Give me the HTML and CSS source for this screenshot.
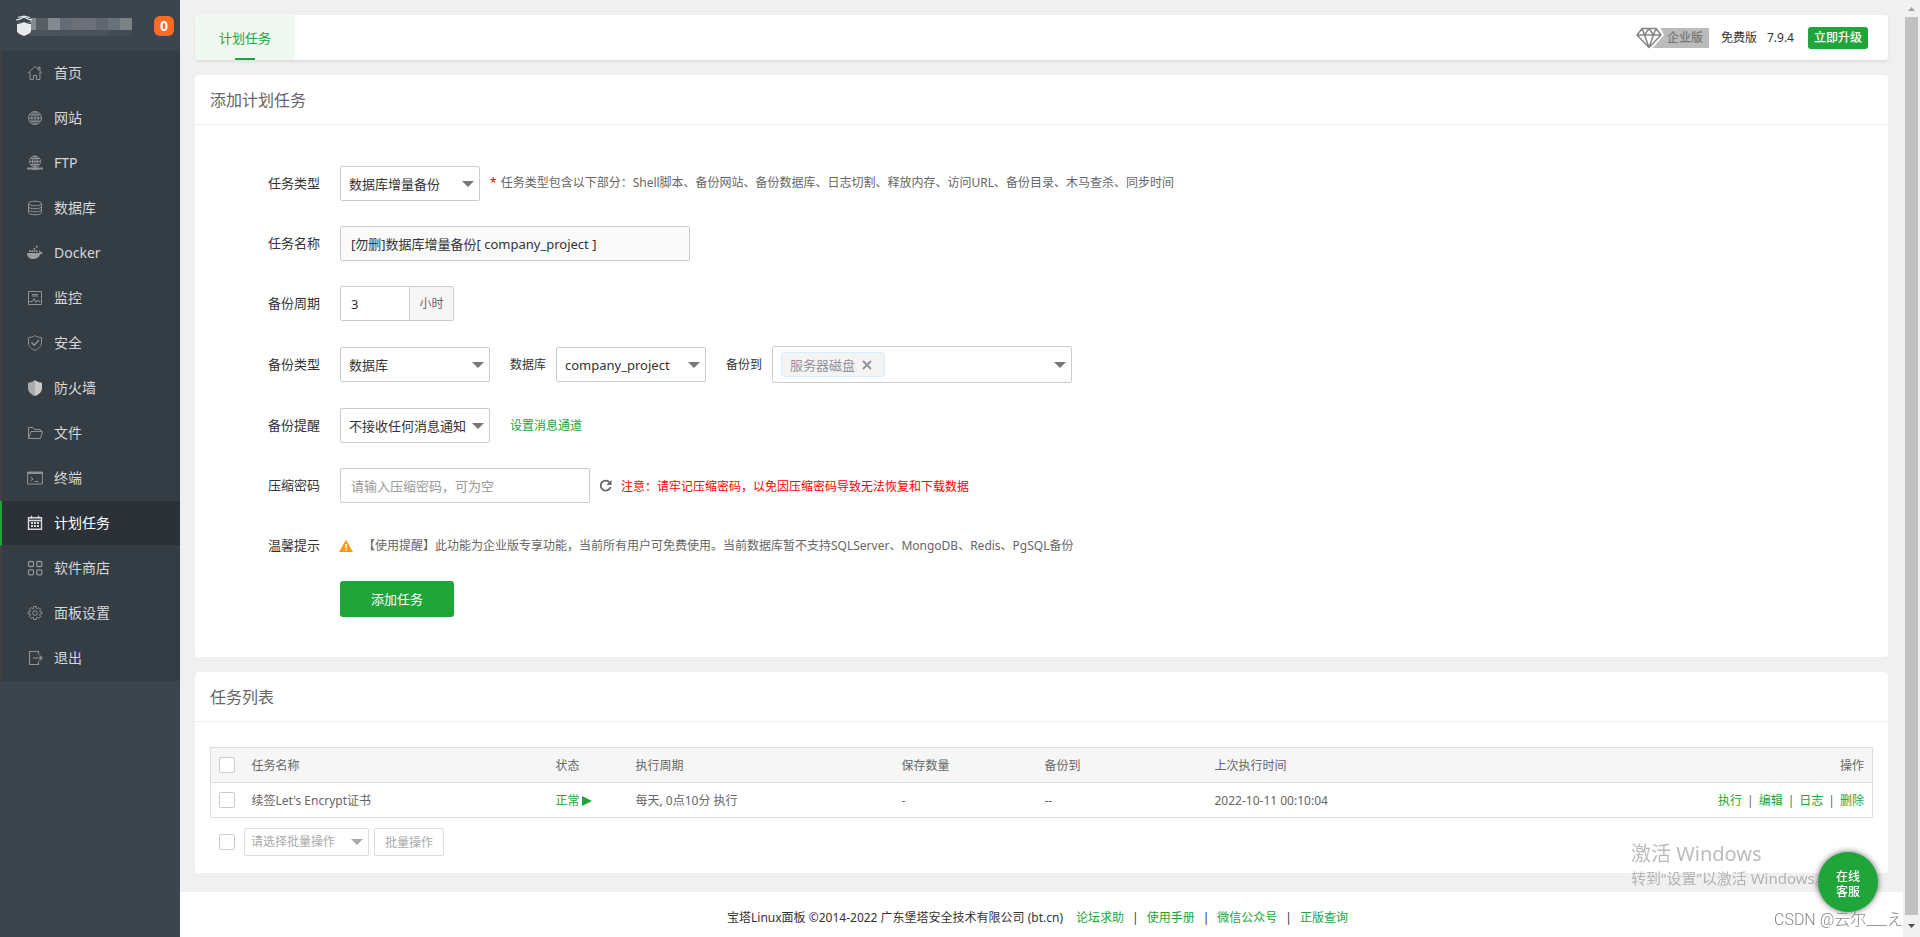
FILE: index.html
```html
<!DOCTYPE html>
<html lang="zh-CN">
<head>
<meta charset="utf-8">
<title>计划任务</title>
<link rel="stylesheet" href="styles.css">
</head>
<body>
<div class="app">
  <aside class="sidebar">
    <div class="brand">
      <svg class="brand-logo" width="120" height="24" viewBox="0 0 120 24">
        <g shape-rendering="crispEdges">
          <path fill="#858c90" d="M18 4h6v12h-6z"/><path fill="#575f65" d="M24 4h12v12h-12z"/><path fill="#828a90" d="M36 4h12v12h-12z"/><path fill="#646b75" d="M48 4h12v12h-12z"/><path fill="#6d6f77" d="M60 4h12v12h-12z"/><path fill="#6b717c" d="M72 4h12v12h-12z"/><path fill="#5f666f" d="M84 4h12v12h-12z"/><path fill="#69717a" d="M96 4h12v12h-12z"/><path fill="#7b8284" d="M108 4h12v12h-12z"/>
          <path fill="#4b535b" d="M18 16h30v6h-30z"/><path fill="#495159" d="M48 16h48v6h-48z"/><path fill="#434c54" d="M96 16h24v6h-24z"/>
        </g>
        <path fill="#e8eaeb" d="M5 9l7-1 7 1v8c0 2-4 4-7 5-3-1-7-3-7-5z"/>
        <path fill="none" stroke="#e8eaeb" stroke-width="1.200" d="M4 6c4 0 6-2 8-3 2 1 4 3 8 3M6 3.500l6-1.500 6 1.500"/>
        <path fill="none" stroke="#3c444d" d="M5 9.500c3 0 5-1 7-2 2 1 4 2 7 2"/>
      </svg>
      <span class="badge">0</span>
    </div>
    <nav class="menu">
      <a href="#" class="menu-item"><svg class="icon" viewBox="0 0 16 16"><path d="M1 8l7-6.500L15 8M3 7v7.500h3.500v-4h3v4H13V7M11.500 4V2h1.500v3.500"/></svg>首页</a>
      <a href="#" class="menu-item"><svg class="icon" viewBox="0 0 16 16"><circle cx="8" cy="8" r="6.500"/><ellipse cx="8" cy="8" rx="3.200" ry="6.500"/><path d="M8 1.500v13M1.500 8h13M2.500 4.800h11M2.500 11.200h11"/></svg>网站</a>
      <a href="#" class="menu-item"><svg class="icon" viewBox="0 0 16 16"><circle cx="8" cy="6.500" r="5.500"/><ellipse cx="8" cy="6.500" rx="2.500" ry="5.500"/><path d="M8 1v13M2.500 6.500h11M3.500 3.500h9M3.500 9.500h9"/><path stroke-width="2" d="M0 13.500h16M5.500 14h5"/></svg>FTP</a>
      <a href="#" class="menu-item"><svg class="icon" viewBox="0 0 16 16"><ellipse cx="8" cy="3.500" rx="6.500" ry="2.300"/><path d="M1.500 3.500v9c0 3 13 3 13 0v-9M1.500 6.500c0 3 13 3 13 0M1.500 9.500c0 3 13 3 13 0"/></svg>数据库</a>
      <a href="#" class="menu-item"><svg class="icon" viewBox="0 0 16 16"><path class="solid" d="M0 8h12c.5-1 .3-2 0-3 1.200.6 1.600 1.400 1.700 2 1 0 1.800.2 2.300.6-.5 1.200-1.600 1.600-2.700 1.600C12 12.500 9 14 6 14c-4 0-6-2.500-6-6zM2 5.200h1.700V7H2zM4.300 5.200H6V7H4.300zM6.600 5.200h1.700V7H6.600zM8.900 5.200h1.700V7H8.900zM6.600 2.900h1.700v1.700H6.600zM8.900.8h1.700v1.700H8.900z"/></svg>Docker</a>
      <a href="#" class="menu-item"><svg class="icon" viewBox="0 0 16 16"><path d="M1.500 1.500h13v13h-13zM2.500 11.500h3l1.500-3 2 4 1.500-2.500 1 1.500h2M5 4.500h6M5 6h6"/></svg>监控</a>
      <a href="#" class="menu-item"><svg class="icon" viewBox="0 0 16 16"><path d="M8 .7c2 1.200 4 1.700 6.500 1.800V8c0 3.500-3 6-6.500 7.300C4.500 14 1.500 11.500 1.500 8V2.500C4 2.400 6 1.900 8 .7z"/><path stroke-width="1.500" d="M4.500 7.500L7.300 10.200 12 5"/></svg>安全</a>
      <a href="#" class="menu-item"><svg class="icon" viewBox="0 0 16 16"><path fill="#a9abac" stroke="none" d="M8 0C6.500 1.500 4 2.500 1 2.700V8c0 4 3 6.500 7 8z"/><path fill="#c9c9c9" stroke="none" d="M8 0c1.500 1.500 4 2.500 7 2.700V8c0 4-3 6.500-7 8z"/></svg>防火墙</a>
      <a href="#" class="menu-item"><svg class="icon" viewBox="0 0 16 16"><path d="M1.500 13.500v-11h4.500l1.500 2h6v2M1.500 13.500L4 6.500h11.500l-2 7z"/></svg>文件</a>
      <a href="#" class="menu-item"><svg class="icon" viewBox="0 0 16 16"><path d="M.6 2h14.800v12H.6zM3.500 7l2.500 2-2.500 2M7.500 11.500h4"/><path stroke-width="2" d="M.6 3h14.800"/></svg>终端</a>
      <a href="#" class="menu-item active"><svg class="icon" viewBox="0 0 16 16"><path stroke-width="1.400" d="M1.500 2.700h13v11.600h-13zM1.500 5.500h13M4.500.8v3M11.500.8v3"/><path stroke-width="2" stroke-dasharray="2 1" d="M4 8h8.500M4 11h8.500"/></svg>计划任务</a>
      <a href="#" class="menu-item"><svg class="icon" viewBox="0 0 16 16"><g stroke-width="1.300"><rect x="1.500" y="1.500" width="5" height="5" rx="1"/><rect x="9.800" y="1.500" width="5" height="5" rx="1"/><rect x="1.500" y="9.800" width="5" height="5" rx="1"/><rect x="9.800" y="9.800" width="5" height="5" rx="1"/></g></svg>软件商店</a>
      <a href="#" class="menu-item"><svg class="icon" viewBox="0 0 16 16"><path d="M6.700 1.500h2.600l.3 2 .6.300 1.700-1.200 1.800 1.800-1.200 1.700.3.600 2 .3v2l-2 .3-.3.600 1.200 1.700-1.800 1.800-1.700-1.200-.6.300-.3 2H6.700l-.3-2-.6-.3-1.700 1.200-1.800-1.800 1.200-1.700-.3-.6-2-.3v-2l2-.3.3-.6-1.200-1.700 1.800-1.800 1.700 1.200.6-.3z"/><circle cx="8" cy="8" r="2.300"/></svg>面板设置</a>
      <a href="#" class="menu-item"><svg class="icon" viewBox="0 0 16 16"><path stroke-width="1.200" d="M11.500 4.500v-3h-9v13h9v-3M6 8h9M12.500 5.500L15 8l-2.500 2.500"/></svg>退出</a>
    </nav>
  </aside>

  <div class="main">
    <main class="content">
      <header class="topbar">
        <a href="#" class="tab">计划任务</a>
        <div class="edition">
          <div class="enterprise">
            <svg width="28" height="22" viewBox="0 0 28 22"><path fill="#fff" d="M2 0h22l4 8-12 14h-6z"/><path fill="none" stroke="#858585" stroke-width="1.500" stroke-linejoin="round" d="M6 1.500h14l5 6.500-12 12.500L1 8zM1 8h24M6 1.500L8.500 8 13 20.500 17.500 8 20 1.500M8.500 8L13 1.500 17.500 8"/></svg>
            <span class="enterprise-name">企业版</span>
          </div>
          <span>免费版</span>
          <span>7.9.4</span>
          <button type="button" class="upgrade">立即升级</button>
        </div>
      </header>

      <section class="panel">
        <h2 class="panel-title">添加计划任务</h2>
        <form class="task-form">
          <div class="row">
            <label class="row-label" for="task-type">任务类型</label>
            <span class="select w140"><select id="task-type"><option>数据库增量备份</option></select></span>
            <p class="hint after-field"><span class="star">*</span>任务类型包含以下部分：Shell脚本、备份网站、备份数据库、日志切割、释放内存、访问URL、备份目录、木马查杀、同步时间</p>
          </div>
          <div class="row">
            <label class="row-label" for="task-name">任务名称</label>
            <input class="text w350" id="task-name" type="text" value="[勿删]数据库增量备份[ company_project ]" readonly>
          </div>
          <div class="row">
            <label class="row-label" for="cycle">备份周期</label>
            <input class="text w70" id="cycle" type="text" value="3"><span class="unit">小时</span>
          </div>
          <div class="row">
            <label class="row-label" for="backup-type">备份类型</label>
            <span class="select w150"><select id="backup-type"><option>数据库</option></select></span>
            <label class="inline-label" for="database">数据库</label>
            <span class="select w150"><select id="database"><option>company_project</option></select></span>
            <span class="inline-label">备份到</span>
            <div class="select multi"><span class="tag">服务器磁盘<button type="button" class="tag-remove" aria-label="移除"><svg width="10" height="10" viewBox="0 0 10 10"><path d="M1 1l8 8M9 1L1 9"/></svg></button></span></div>
          </div>
          <div class="row">
            <label class="row-label" for="notice">备份提醒</label>
            <span class="select w150"><select id="notice"><option>不接收任何消息通知</option></select></span>
            <a href="#" class="channel">设置消息通道</a>
          </div>
          <div class="row">
            <label class="row-label" for="password">压缩密码</label>
            <input class="text w250" id="password" type="text" placeholder="请输入压缩密码，可为空">
            <button type="button" class="refresh" aria-label="刷新"><svg width="14" height="14" viewBox="0 0 14 14"><path fill="none" stroke="#666" stroke-width="1.800" d="M10.600 3.400A5 5 0 1 0 11.500 8"/><path fill="#666" d="M12.500 1v5h-5z"/></svg></button>
            <span class="warning">注意：请牢记压缩密码，以免因压缩密码导致无法恢复和下载数据</span>
          </div>
          <div class="row tip">
            <span class="row-label">温馨提示</span>
            <svg class="tip-icon" width="14" height="14" viewBox="0 0 14 14"><path fill="#ff9913" d="M7 .8L14 13H0z"/><path stroke="#fff" stroke-width="1.600" d="M7 5v4M7 10v1.600"/></svg>
            <span class="hint tip-text">【使用提醒】此功能为企业版专享功能，当前所有用户可免费使用。当前数据库暂不支持SQLServer、MongoDB、Redis、PgSQL备份</span>
          </div>
          <button type="button" class="submit">添加任务</button>
        </form>
      </section>

      <section class="panel">
        <h2 class="panel-title">任务列表</h2>
        <div class="list">
          <table class="tasks">
            <colgroup><col class="c-check"><col class="c-name"><col class="c-state"><col class="c-cycle"><col class="c-keep"><col class="c-target"><col></colgroup>
            <thead>
              <tr><th><input type="checkbox" aria-label="全选"></th><th>任务名称</th><th>状态</th><th>执行周期</th><th>保存数量</th><th>备份到</th><th><div class="split"><span>上次执行时间</span><span>操作</span></div></th></tr>
            </thead>
            <tbody>
              <tr><td><input type="checkbox" aria-label="选择任务"></td><td>续签Let's Encrypt证书</td><td><a href="#" class="state">正常<svg width="10" height="10" viewBox="0 0 10 10"><path fill="#20a53a" d="M0 0l10 5-10 5z"/></svg></a></td><td>每天, 0点10分 执行</td><td>-</td><td>--</td><td><div class="split"><span>2022-10-11 00:10:04</span><span class="actions"><a href="#">执行</a><i>|</i><a href="#">编辑</a><i>|</i><a href="#">日志</a><i>|</i><a href="#">删除</a></span></div></td></tr>
            </tbody>
          </table>
          <div class="batch">
            <input type="checkbox" aria-label="全选任务">
            <span class="select small"><select aria-label="批量操作" disabled><option>请选择批量操作</option></select></span>
            <button type="button" class="batch-run" disabled>批量操作</button>
          </div>
        </div>
      </section>
    </main>
    <footer class="footer">
      <span class="copyright">宝塔Linux面板 ©2014-2022 广东堡塔安全技术有限公司 (bt.cn)</span>
      <a href="#">论坛求助</a><i>|</i><a href="#">使用手册</a><i>|</i><a href="#">微信公众号</a><i>|</i><a href="#">正版查询</a>
    </footer>
  </div>

  <div class="scrollbar">
    <svg width="7" height="4" viewBox="0 0 7 4"><path fill="#a3a3a3" d="M0 4l3.500-4L7 4z"/></svg>
    <div class="thumb"></div>
    <svg width="7" height="4" viewBox="0 0 7 4"><path fill="#505050" d="M0 0l3.500 4L7 0z"/></svg>
  </div>
</div>
<button type="button" class="service">在线<br>客服</button>
<div class="activation"><p class="activation-title">激活 Windows</p><p>转到“设置”以激活 Windows。</p></div>
<div class="credit">CSDN @云尔___え</div>
</body>
</html>
```
FILE: styles.css
```css
* { box-sizing: border-box; }
body {
  margin: 0;
  background: #f0f0f0;
  color: #333;
  font: 12px/20px "Noto Sans", "Noto Sans CJK SC", sans-serif;
}
a { color: #20a53a; text-decoration: none; }
button, input, select { font: inherit; color: inherit; margin: 0; }
button { padding: 0; border: 0; background: none; cursor: pointer; }
p, h2 { margin: 0; }
i { font-style: normal; }
.app { display: flex; min-height: 100vh; }

/* Sidebar */
.sidebar { flex: 0 0 180px; background: #3c444d; }
.brand { display: flex; align-items: center; justify-content: space-between; height: 51px; padding: 0 6px 0 12px; }
.badge { width: 20px; border-radius: 6px; background: #ff6b22; color: #fff; font-size: 14px; font-weight: 700; text-align: center; }
.menu-item {
  display: flex; align-items: center; gap: 11px; height: 45px; padding-left: 25px;
  border-left: 2px solid #404142; border-bottom: 1px solid #353d44;
  background: #353d44; color: #d6d7d9; font-size: 14px;
}
.menu-item.active { border-left-color: #20a53a; background: #2c3138; color: #fff; }
.icon { width: 16px; height: 16px; fill: none; stroke: #8f9396; stroke-width: 1; }
.icon .solid { fill: #9a9d9f; stroke: none; }
.active .icon { stroke: #d8d9da; }

/* Main column */
.main { flex: 1; min-width: 0; display: flex; flex-direction: column; }
.content { display: flex; flex-direction: column; gap: 15px; padding: 15px 15px 19px; }
.topbar {
  display: flex; justify-content: space-between; height: 45px;
  border-radius: 4px; background: #fff; box-shadow: 0 2px 3px rgba(0, 0, 0, .07);
}
.tab {
  position: relative; width: 100px; border-radius: 4px 0 0 4px; background: #eff9f1;
  font-size: 13px; line-height: 47px; text-align: center;
}
.tab::after { content: ""; position: absolute; left: 40px; bottom: 0; width: 20px; height: 2px; background: #20a53a; }
.edition { display: flex; align-items: center; gap: 10px; padding-right: 20px; }
.enterprise { display: flex; align-items: center; margin-right: 2px; }
.enterprise svg { position: relative; }
.enterprise-name { width: 56px; margin-left: -11px; padding-left: 14px; background: #bbb; color: #777; font-weight: 500; }
.upgrade { height: 22px; padding: 0 6px; margin-left: 4px; border-radius: 3px; background: #20a53a; color: #fff; font-weight: 500; }
.panel { border-radius: 4px; background: #fff; }
.panel-title { padding: 2px 15px 0; border-bottom: 1px solid #eee; color: #666; font-size: 16px; font-weight: 400; line-height: 47px; }

/* Form */
.task-form { padding: 41px 0 40px; font-size: 13px; }
.row { display: flex; align-items: center; min-height: 35px; margin-bottom: 25px; }
.row.tip { margin-bottom: 18px; }
.row-label { width: 125px; margin-right: 20px; padding-bottom: 2px; text-align: right; }
.inline-label { margin: 0 10px 0 20px; font-size: 12px; }
.select { position: relative; display: block; }
.select::after {
  content: ""; position: absolute; right: 6px; top: 50%; margin-top: -3px; pointer-events: none;
  border: 6px solid transparent; border-top-color: #777; border-bottom: 0;
}
.select select {
  display: block; width: 100%; height: 35px; padding: 0 20px 0 8px;
  border: 1px solid #ccc; border-radius: 2px; background: #fff; appearance: none;
}
.text { height: 35px; padding: 0 10px; border: 1px solid #ccc; border-radius: 2px; background: #fff; }
.text[readonly] { background: #fafafa; }
.text::placeholder { color: #999; opacity: 1; }
.w70 { width: 70px; border-radius: 2px 0 0 2px; }
.w140 { width: 140px; }
.w150 { width: 150px; }
.w250 { width: 250px; }
.w350 { width: 350px; }
.unit { width: 45px; margin-left: -1px; border: 1px solid #ccc; border-radius: 0 2px 2px 0; background: #f6f6f6; color: #666; font-size: 12px; line-height: 33px; text-align: center; }
.multi { display: flex; align-items: center; width: 300px; height: 37px; padding: 0 8px; border: 1px solid #ccc; border-radius: 2px; }
.multi::after { right: 5px; }
.tag { display: flex; align-items: center; gap: 7px; height: 25px; padding: 0 12px 0 8px; border: 1px solid #d9ecff; border-radius: 4px; background: #f4f4f4; color: #909399; }
.tag-remove { display: flex; }
.tag-remove path { stroke: #909399; stroke-width: 2; }
.hint { color: #666; font-size: 12px; }
.after-field { margin-left: 10px; padding-bottom: 2px; }
.star { margin-right: 4px; color: #f00; }
.channel { margin-left: 20px; font-size: 12px; }
.refresh { display: flex; margin: 0 8px 0 9px; }
.warning { padding-top: 2px; color: #f00; font-size: 12px; }
.tip-icon { margin-left: -1px; }
.tip-text { margin-left: 10px; }
.submit { display: block; width: 114px; height: 36px; margin-left: 145px; border-radius: 3px; background: #20a53a; color: #fff; }

/* Task list */
.list { padding: 25px 15px 17px; }
.tasks { width: 100%; table-layout: fixed; border-collapse: collapse; border: 1px solid #ddd; color: #666; }
.tasks th, .tasks td { height: 35px; padding: 2px 8px 0; border-bottom: 1px solid #ddd; font-weight: 400; text-align: left; }
.tasks th:first-child, .tasks td:first-child { padding-top: 0; }
.tasks th { background: #f6f6f6; }
.c-check { width: 33px; }
.c-name { width: 304px; }
.c-state { width: 80px; }
.c-cycle { width: 266px; }
.c-keep { width: 143px; }
.c-target { width: 170px; }
.split { display: flex; justify-content: space-between; }
.actions { display: flex; gap: 5px; }
.state { display: flex; align-items: center; gap: 2px; }
input[type="checkbox"] { display: block; width: 16px; height: 16px; border: 1px solid #ccc; border-radius: 2px; background: #fff; appearance: none; }
.batch { display: flex; align-items: center; margin-top: 10px; padding-left: 9px; }
.small { width: 125px; margin: 0 5px 0 9px; }
.small select { height: 28px; padding: 0 20px 0 6px; border-color: #ddd; color: #aaa; opacity: 1; }
.small::after { border-top-color: #aaa; }
.batch-run { width: 70px; height: 28px; padding-top: 2px; border: 1px solid #ddd; border-radius: 2px; color: #aaa; }

/* Footer */
.footer { flex: 1; display: flex; justify-content: center; gap: 8px; padding: 11px 8px 0 0; background: #fff; line-height: 30px; }
.copyright { margin-right: 5px; }

/* Scrollbar and overlays */
.scrollbar { flex: 0 0 17px; display: flex; flex-direction: column; align-items: center; justify-content: space-between; height: 100vh; padding: 7px 0 9px; background: #f1f1f1; }
.thumb { flex: 1; width: 13px; margin: 6px 0 9px; background: #c1c1c1; }
.service {
  position: fixed; right: 42px; bottom: 25px; width: 60px; height: 60px; padding-top: 4px; border-radius: 50%;
  background: #20a53a; box-shadow: 0 0 6px rgba(0, 0, 0, .6); color: #fff; font-weight: 500; line-height: 15px;
}
.activation { position: fixed; left: calc(100% - 289px); bottom: 48px; color: rgba(120, 120, 120, .5); font-size: 15px; line-height: 22px; white-space: nowrap; pointer-events: none; }
.activation-title { font-size: 20px; line-height: 26px; }
.credit { position: fixed; right: 17px; bottom: 5px; color: #888; font-family: Roboto, "Noto Sans CJK SC", sans-serif; font-size: 16px; font-weight: 300; line-height: 24px; pointer-events: none; }
```
